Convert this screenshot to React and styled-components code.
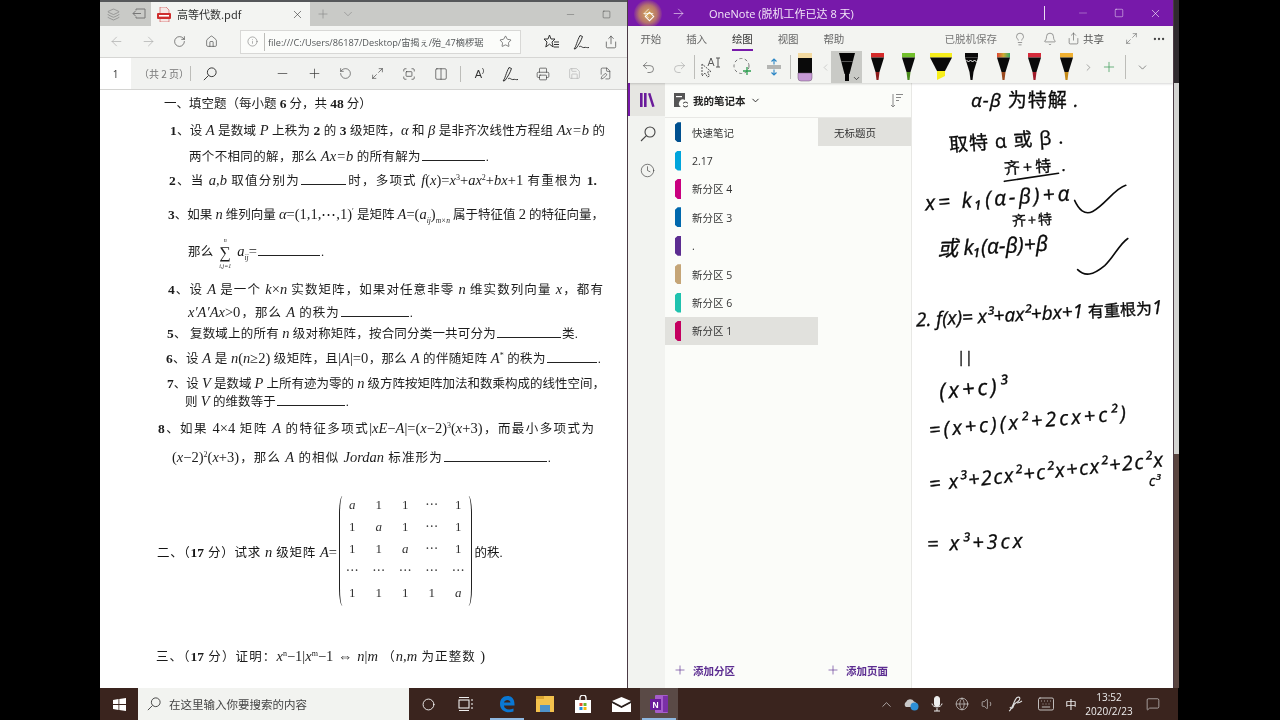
import React from "react";
import styled, { createGlobalStyle } from "styled-components";
import {
  ArrowLeft, ArrowRight, RotateCw, Home, Info, Star, Share, Minus, Plus, Maximize2, Printer, Save, X,
  ChevronDown, ChevronUp, ChevronLeft, ChevronRight, Square, Undo2, Redo2, Lightbulb, Bell, Ellipsis, Clock,
  Volume1, Keyboard, MessageSquare, Circle, Fullscreen, Columns2, RotateCcw, FileEdit, Layers, Globe,
} from "lucide-react";

const CJK = `"Noto Sans CJK SC", sans-serif`;
const UI = `"Open Sans", "Noto Sans CJK SC", sans-serif`;
const SERIF = `"Liberation Serif", "Noto Sans CJK SC", serif`;

/* full-width punctuation of the scanned paper */
const CM = "\uFF0C";
const LP = "\uFF08";
const RP = "\uFF09";
const CO = "\uFF1A";

const Global = createGlobalStyle`
  html, body { margin: 0; padding: 0; background: #000; }
  * { box-sizing: border-box; }
`;

const Screen = styled.div`
  width: 1280px; height: 720px; background: #000; padding: 0 102px 0 100px; overflow: hidden;
  font-family: ${UI}; filter: blur(0.35px);
`;
const Desktop = styled.div`display: flex; flex-direction: column; height: 720px;`;
const Windows = styled.div`display: flex; height: 688px; gap: 1px; background: #4a3a44;`;

/* shared */
const Slot = styled.div`
  width: ${p => p.$w}px; flex: none; height: 100%; display: flex; align-items: center; justify-content: center;
  color: ${p => p.$c || "#333"}; position: relative;
  margin-left: ${p => p.$ml || 0}px;
  background: ${p => p.$bg || "transparent"};
`;
const Spacer = styled.div`flex: 1;`;
const VRule = styled.div`
  width: 1px; flex: none; height: ${p => p.$h}px; background: ${p => p.$c || "#bdbdb9"};
  margin: 0 ${p => p.$mr || 0}px 0 ${p => p.$ml || 0}px;
`;

/* PDF window */
const PdfWindow = styled.section`width: 527px; flex: none; display: flex; flex-direction: column; background: #fff; overflow: hidden;`;
const TabStrip = styled.div`height: 26px; border-top: 2px solid #55575a; background: #c9cac7; display: flex; align-items: stretch; flex: none;`;
const Tab = styled.div`
  width: 159px; flex: none; background: #f3f4f2; display: flex; align-items: center; padding-left: 6px; font-size: 11px; color: #333;
`;
const TabTitle = styled.span`margin-left: 6px; flex: 1; font-family: ${CJK};`;
const AddressRow = styled.div`height: 32px; flex: none; background: #f3f4f2; display: flex; align-items: center; border-bottom: 1px solid #d6d6d4;`;
const AddressBox = styled.div`
  width: 281px; height: 24px; flex: none; margin-left: 13px; background: #fbfcfa; border: 1px solid #d8d8d6; display: flex; align-items: center; color: #444;
`;
const Url = styled.span`font-size: 9.2px; margin-left: 3px; flex: 1; white-space: nowrap; color: #55585a;`;
const PdfBar = styled.div`height: 32px; flex: none; background: #f1f2f0; display: flex; align-items: center; border-bottom: 1px solid #d4d4d2;`;
const PageInput = styled.div`width: 31px; height: 100%; flex: none; background: #fff; display: flex; align-items: center; justify-content: center; font-size: 10px; color: #333;`;
const PageLabel = styled.div`width: 59px; flex: none; padding-left: 8px; font-size: 10px; color: #777; font-family: ${CJK};`;
const ReadAloud = styled.span`font-size: 11px; font-family: "Liberation Sans", sans-serif;`;

const Page = styled.article`
  flex: 1; background: #fff; padding-top: 5px; color: #141414; font-family: ${SERIF}; font-size: 12.5px; overflow: hidden;
`;
const Line = styled.div`
  height: ${p => p.$h || 18}px; line-height: ${p => p.$h || 18}px; margin-top: ${p => p.$mt || 0}px; margin-left: ${p => p.$x - 100}px; width: ${p => p.$w}px;
  text-align-last: justify; white-space: nowrap; color: #1c1c1c;
`;
const MatrixLine = styled.div`
  height: 110px; margin-top: ${p => p.$mt}px; margin-left: ${p => p.$x - 100}px; display: flex; align-items: center;
`;
const MatrixLabel = styled.div`width: 180px; flex: none; text-align-last: justify; white-space: nowrap;`;
const Matrix = styled.div`
  width: 132.5px; height: 110px; margin: 0 3px 0 2px; flex: none; position: relative;
  display: grid; grid-template-columns: repeat(5, 26.5px); grid-auto-rows: 22px; text-align: center; line-height: 18px; font-size: 13px;
  &::before, &::after { content: ""; position: absolute; top: 0; bottom: 0; width: 6px; border: 0 solid #222; border-radius: 6px / 30px; }
  &::before { left: 0; border-left-width: 1px; }
  &::after { right: 0; border-right-width: 1px; }
`;
const Cell = styled.span`font-style: ${p => p.$i ? "italic" : "normal"}; color: #333;`;
const M = styled.i`font-family: "Liberation Serif", serif; font-size: 14.5px;`;
const N = styled.span`font-family: "Liberation Serif", serif; font-size: 14.5px;`;
const B = styled.b`font-family: "Liberation Serif", serif; font-size: 13.5px;`;
const Sup = styled.sup`font-size: 8px; line-height: 0;`;
const Sub = styled.sub`font-size: 7.5px; line-height: 0; font-style: italic;`;
const Blank = styled.span`
  display: inline-block; width: ${p => p.$w}px; height: 12px; border-bottom: 1px solid #222; vertical-align: baseline; margin: 0 1px;
`;
const SumStack = styled.span`
  display: inline-flex; flex-direction: column; align-items: center; gap: 2px; vertical-align: middle; width: 24px; margin: -14px 0; line-height: 1;
  text-align-last: center;
`;
const SumTiny = styled.span`font-size: 6px; line-height: 6px; font-style: italic;`;
const SumSign = styled.span`font-size: 16px; line-height: 16px; font-family: "Liberation Serif", serif;`;

/* OneNote */
const NoteWindow = styled.section`width: 545px; flex: none; display: flex; flex-direction: column; background: #fff; position: relative; overflow: hidden;`;
const TitleBar = styled.div`height: 26px; flex: none; background: #7719aa; color: #fff; display: flex; align-items: center; position: relative; padding-left: 4px;`;
const Glow = styled.div`
  position: absolute; left: 6px; top: 0; width: 28px; height: 28px; border-radius: 50%;
  background: radial-gradient(circle, rgba(226,190,80,.9) 0%, rgba(215,165,75,.65) 45%, rgba(180,100,110,0) 75%);
  &::after { content: ""; position: absolute; left: 12px; top: 13px; width: 5px; height: 5px; border: 1px solid #fff; transform: rotate(45deg); }
`;
const NoteTitle = styled.span`font-size: 11px; margin-left: 17px; white-space: nowrap; font-family: ${UI}; color: #f3e7f8;`;
const Ribbon = styled.div`height: 57px; flex: none; background: #f3f4f1; display: flex; flex-direction: column; box-shadow: 0 1px 2px rgba(0,0,0,.16); position: relative; z-index: 1;`;
const RibbonTabs = styled.div`height: 25px; flex: none; display: flex; align-items: center;`;
const RTab = styled.div`
  width: 45.75px; height: 100%; flex: none; display: flex; justify-content: center; font-size: 10.5px; color: #555; font-family: ${CJK}; padding-top: 5px;
`;
const RTabLabel = styled.span`
  height: 20px; line-height: 16px; border-bottom: ${p => p.$active ? "2px solid #7719aa" : "none"}; color: ${p => p.$active ? "#333" : "#666"};
`;
const Saved = styled.span`font-size: 10.5px; color: #777; font-family: ${CJK}; margin-right: 8px;`;
const ShareBtn = styled.div`width: 51px; flex: none; display: flex; align-items: center; gap: 3px; padding-left: 1px; font-size: 10.5px; color: #555; font-family: ${CJK};`;
const ToolRow = styled.div`height: 32px; flex: none; display: flex; align-items: center; padding-left: 4px;`;
const PenChevron = styled.span`position: absolute; right: 1px; bottom: 0; display: flex; color: #222;`;
const Body = styled.div`flex: 1; display: flex; min-height: 0;`;
const Rail = styled.nav`width: 37px; flex: none; background: #f2f3f0; display: flex; flex-direction: column;`;
const RailBtn = styled.div`
  height: ${p => p.$h}px; display: flex; align-items: center; justify-content: center; color: #444;
  background: ${p => p.$active ? "#e6e6e2" : "transparent"};
  border-left: 2px solid ${p => p.$active ? "#7719aa" : "transparent"};
`;
const Panes = styled.div`width: 247px; flex: none; background: #fbfcf9; border-right: 1px solid #e8e8e5; display: flex; flex-direction: column;`;
const NotebookHead = styled.div`height: 35px; flex: none; display: flex; align-items: center; padding-left: 9px; border-bottom: 1px solid #e8e8e5; font-weight: 700; font-size: 10.5px; color: #222; font-family: ${CJK};`;
const NotebookName = styled.span`margin-left: 4px; margin-right: 4px;`;
const Columns = styled.div`flex: 1; display: flex; min-height: 0;`;
const SectionCol = styled.div`width: 153px; flex: none; display: flex; flex-direction: column;`;
const PageCol = styled.div`flex: 1; display: flex; flex-direction: column;`;
const ListArea = styled.div`flex: 1;`;
const Row = styled.div`
  height: 28.4px; display: flex; align-items: center; font-size: 10.5px; color: #333;
  padding-left: ${p => p.$pl}px; background: ${p => p.$sel ? "#e1e1dd" : "transparent"};
`;
const SecTab = styled.span`
  width: 6px; height: 20px; margin-right: 11px; flex: none; background: ${p => p.$c};
  clip-path: polygon(45% 0, 100% 0, 100% 100%, 45% 100%, 0 88%, 0 12%);
`;
const AddBtn = styled.div`
  height: 36px; flex: none; display: flex; align-items: center; gap: 6px; padding-left: ${p => p.$pl}px; color: #5c2d91; font-size: 10.5px; font-weight: 600; font-family: ${CJK};
`;
const Canvas = styled.div`flex: 1; position: relative; background: #fff; overflow: hidden;`;
const Ink = styled.div`
  position: absolute; left: ${p => p.$x - 913}px; top: ${p => p.$y - 85}px; font-size: ${p => p.$s || 20}px; line-height: 1; color: #0b0b0b; white-space: nowrap;
  font-family: "Open Sans", "Noto Sans CJK SC", sans-serif; font-style: ${p => p.$zh ? "normal" : "italic"};
  letter-spacing: ${p => p.$ls || 0}px; transform: translateY(-50%) rotate(${p => p.$r || 0}deg); transform-origin: left center;
  -webkit-text-stroke: .35px #0b0b0b;
`;
const InkZh = styled.span`font-style: normal; font-size: ${p => p.$s || 18}px;`;
const InkStroke = styled.svg`position: absolute; inset: 0; width: 100%; height: 100%; pointer-events: none;`;
const Strip = styled.div`width: 5px; flex: none; background: linear-gradient(#2f2a2e 0 12%, #d3d3d1 12% 66%, #5a4540 66%);`;

/* Taskbar */
const Taskbar = styled.footer`height: 32px; flex: none; background: #3a241e; display: flex; color: #eee; width: 1078px;`;
const SearchBox = styled.div`
  width: 271px; flex: none; background: #f2f3f0; display: flex; align-items: center; gap: 8px; padding-left: 9px; font-size: 11.5px; color: #444; font-family: ${CJK};
`;
const TaskIcon = styled(Slot)`
  ${p => p.$running && `&::after { content: ""; position: absolute; left: 2px; right: 2px; bottom: 0; height: 2px; background: #8fb8e0; }`}
`;
const Ime = styled.span`font-size: 11.5px; color: #eee; font-family: ${CJK};`;
const ClockBox = styled.div`width: 58px; flex: none; display: flex; flex-direction: column; align-items: center; justify-content: center; font-size: 10px; line-height: 14px; color: #eee;`;

const Glass = ({ size = 15 }) => (
  <svg width={size} height={size} viewBox="0 0 16 16" fill="none" stroke="currentColor" strokeWidth="1.1">
    <circle cx="10" cy="6" r="5" /><path d="M6.4 9.600L1 15" />
  </svg>
);
const CalligraphyPen = () => (
  <svg width="17" height="16" viewBox="0 0 17 16" fill="none" stroke="currentColor" strokeWidth="1">
    <path d="M1 15C3 13 4 7 7 1.500L9.500 2.500C8 7 5.500 11 3 14.500Z" /><path d="M6 13C8 11 9 14 11 13.500S14 14 16 13.500" />
  </svg>
);
const FavList = () => (
  <svg width="17" height="15" viewBox="0 0 17 15" fill="none" stroke="currentColor" strokeWidth="1">
    <path d="M6.500 1L8 5H12L9 8L10.200 13L6.500 10.200L2.800 13L4 8L1 5H5Z" /><path d="M11 8H16M11 10.500H16M11 13H16" />
  </svg>
);
const BackTab = () => (
  <svg width="14" height="12" viewBox="0 0 14 12" fill="none" stroke="currentColor" strokeWidth="1">
    <path d="M4 2.500V1H13V10H4V8.500" /><path d="M9 5.500H1M3.500 3L1 5.500L3.500 8" />
  </svg>
);
const TextSelect = () => (
  <svg width="24" height="22" viewBox="0 0 24 22" fill="none" stroke="#555" strokeWidth="1">
    <path d="M3 8L3 20L6 17L8.500 21L10.500 20L8.500 16L12 15.500Z" strokeDasharray="2 1" />
    <path d="M9 10L12 2L15 10M10.200 7.500H13.800M19 2V11M17 2H21M17 11H21" />
  </svg>
);
const DashAdd = () => (
  <svg width="20" height="20" viewBox="0 0 20 20" fill="none">
    <circle cx="8.500" cy="9" r="7.500" stroke="#777" strokeDasharray="3 2.500" />
    <path d="M14 10V18M10 14H18" stroke="#2e9e50" strokeWidth="1.300" />
  </svg>
);
const SpaceArrows = () => (
  <svg width="16" height="18" viewBox="0 0 16 18" fill="none" stroke="#2b86c5" strokeWidth="1.100">
    <path d="M8 1V6.500M5.500 3.500L8 1L10.500 3.500M8 11.500V17M5.500 14.500L8 17L10.500 14.500" />
    <path d="M1 8H15M1 10H15" stroke="#777" />
  </svg>
);
const SortLines = () => (
  <svg width="14" height="15" viewBox="0 0 14 15" fill="none" stroke="currentColor" strokeWidth="1">
    <path d="M3 1V14M1 12L3 14L5 12M6 1.500H13M6 4.500H11M6 7.500H9" />
  </svg>
);
const TaskView = () => (
  <svg width="15" height="16" viewBox="0 0 15 16" fill="none" stroke="#eee" strokeWidth="1.100">
    <rect x="1" y="4" width="10" height="8" /><path d="M1 1.500H11M1 14.500H11M14 3V5M14 7V9M14 11V13" />
  </svg>
);
const CloudSync = () => (
  <svg width="16" height="14" viewBox="0 0 16 14">
    <path d="M3 10A3 3 0 0 1 3 5A4.500 4.500 0 0 1 11 4.500A3 3 0 0 1 12 10Z" fill="#c8c8c8" />
    <circle cx="11.500" cy="9.500" r="4" fill="#2d8fd6" />
  </svg>
);
const MicFill = () => (
  <svg width="12" height="16" viewBox="0 0 12 16" fill="none" stroke="#eee">
    <rect x="3.500" y="0.500" width="5" height="10" rx="2.500" fill="#eee" /><path d="M1 7.500C1 12 11 12 11 7.500M6 12V15M3 15H9" />
  </svg>
);
const PenFlourish = () => (
  <svg width="16" height="18" viewBox="0 0 16 18" fill="none" stroke="#ddd" strokeWidth="1.100">
    <path d="M2 16C5 15 7 5 10 2.500C13 1 14 4 11 6.500C9 8 7 8 6.500 11C6 14 3.500 14 3 12" /><path d="M10 8C12 8 13 7.500 15 6" />
  </svg>
);

const Pen = ({ cap, tip, body = "#0a0a0a", wave }) => (
  <svg width="20" height="30" viewBox="0 0 20 30">
    <rect x="3" y="1" width="13" height="4.5" fill={cap} />
    <path d="M3 5.500H16L11.500 20H7.500Z" fill={body} />
    {wave && <path d="M4.500 8l2 2 2-2 2 2 2-2 2 2" stroke="#fff" fill="none" strokeWidth="1" />}
    <path d="M7.500 20H11.500L10.500 28H8.500Z" fill={tip} />
  </svg>
);
const RainbowPen = () => (
  <svg width="20" height="30" viewBox="0 0 20 30">
    <defs><linearGradient id="rb"><stop offset="0" stopColor="#d43" /><stop offset=".5" stopColor="#ca3" /><stop offset="1" stopColor="#3a6" /></linearGradient></defs>
    <rect x="3" y="1" width="13" height="4.5" fill="url(#rb)" />
    <path d="M3 5.500H16L11.500 20H7.500Z" fill="#0a0a0a" />
    <path d="M7.500 20H11.500L10.500 28H8.500Z" fill="#9a4a20" />
  </svg>
);
const BlackPen = () => (
  <svg width="20" height="30" viewBox="0 0 20 30">
    <path d="M2 1H18L12.500 22H7.500Z" fill="#050505" />
    <rect x="4" y="9" width="12" height="1" fill="#555" />
    <rect x="8" y="22" width="4" height="7" fill="#050505" />
  </svg>
);
const Highlighter = () => (
  <svg width="26" height="30" viewBox="0 0 26 30">
    <rect x="2" y="1" width="22" height="4.500" fill="#f6ee1c" />
    <path d="M2 5.500H24L17 19H9Z" fill="#0a0a0a" />
    <path d="M9 19H17V24L9 28Z" fill="#f6ee1c" />
  </svg>
);
const Eraser = () => (
  <svg width="16" height="30" viewBox="0 0 16 30">
    <rect x="1" y="1" width="14" height="5" fill="#f2d9a0" />
    <rect x="1" y="6" width="14" height="15" fill="#0a0a0a" />
    <path d="M1 21H15V26Q15 29 12 29H4Q1 29 1 26Z" fill="#c79ad6" stroke="#6b5272" strokeWidth=".5" />
  </svg>
);
const PdfIcon = () => (
  <svg width="14" height="15" viewBox="0 0 14 15">
    <path d="M3 0H9L12 3V15H3Z" fill="#f6e7e5" stroke="#c44" strokeWidth=".6" />
    <rect x="0" y="6" width="14" height="6" rx="1" fill="#cf2e2e" />
    <rect x="2" y="8" width="10" height="1.600" fill="#fff" />
  </svg>
);
const NotebookIcon = () => (
  <svg width="15" height="15" viewBox="0 0 15 15">
    <path d="M0 0H11V7A4 4 0 0 0 7 14H0Z" fill="#555" />
    <rect x="2" y="3" width="6" height="1.200" fill="#fff" />
    <path d="M9 10.500a3 3 0 0 1 5 0M14 12.500a3 3 0 0 1-5 0" stroke="#333" fill="none" />
  </svg>
);
const LibraryIcon = () => (
  <svg width="15" height="14" viewBox="0 0 15 14">
    <rect x="0" y="0" width="2.600" height="14" fill="#6a1b9a" />
    <rect x="4" y="0" width="2.600" height="14" fill="#6a1b9a" />
    <path d="M8 0.600L10.400 0L14.600 13.400L12.200 14Z" fill="#6a1b9a" />
  </svg>
);
const WinLogo = () => (
  <svg width="13" height="13" viewBox="0 0 13 13"><path d="M0 1.900L5.500 1V6H0ZM6.300 .9L13 0V6H6.300ZM0 6.900H5.500V12L0 11.100ZM6.300 6.900H13V13L6.300 12.100Z" fill="#fff" /></svg>
);
const EdgeLogo = () => (
  <svg width="16" height="18" viewBox="0 0 16 18">
    <path d="M1 9C1 4 4 1 8.500 1 13 1 15.500 4 15.500 9.500V10.500H5C5 14 9.500 15.500 14.500 13.500V16.500C8 18.800 1 16 1 9ZM5 7.500H11.500C11.500 4 5.500 4 5 7.500Z" fill="#0a78d4" />
  </svg>
);
const FolderLogo = () => (
  <svg width="18" height="16" viewBox="0 0 18 16">
    <rect x="0" y="0" width="18" height="16" fill="#f3c24d" />
    <rect x="0" y="0" width="8" height="3" fill="#d9a431" />
    <rect x="4" y="9" width="10" height="7" fill="#4f93c9" />
  </svg>
);
const StoreLogo = () => (
  <svg width="16" height="18" viewBox="0 0 16 18">
    <path d="M5 5V3a3 3 0 0 1 6 0V5" stroke="#fff" fill="none" strokeWidth="1.300" />
    <rect x="0" y="5" width="16" height="13" fill="#fff" />
    <rect x="4.500" y="8" width="3" height="3" fill="#e8492e" /><rect x="8.500" y="8" width="3" height="3" fill="#6cb52d" />
    <rect x="4.500" y="12" width="3" height="3" fill="#1f8ee0" /><rect x="8.500" y="12" width="3" height="3" fill="#f5b90f" />
  </svg>
);
const MailLogo = () => (
  <svg width="19" height="15" viewBox="0 0 19 15">
    <path d="M0 4L9.500 0L19 4L9.500 9Z" fill="#fff" />
    <path d="M0 6L9.500 11L19 6V15H0Z" fill="#fff" />
    <path d="M0 5L9.500 10L19 5" stroke="#222" strokeWidth="1" fill="none" />
  </svg>
);
const NoteLogo = () => (
  <svg width="20" height="20" viewBox="0 0 20 20">
    <rect x="6" y="1" width="13" height="18" rx="1" fill="#a55dc9" />
    <rect x="14" y="2" width="5" height="16" fill="#7a2fa6" />
    <rect x="1" y="5" width="11" height="11" fill="#6a1b9a" />
    <text x="6.500" y="13.500" fill="#fff" fontSize="8.500" fontWeight="700" textAnchor="middle" fontFamily="Liberation Sans, sans-serif">N</text>
  </svg>
);

const sections = [
  ["快速笔记", "#00508f"], ["2.17", "#00a5dc"], ["新分区 4", "#c9007f"], ["新分区 3", "#0068ad"],
  [".", "#5c2d91"], ["新分区 5", "#c5a577"], ["新分区 6", "#1fc2ae"], ["新分区 1", "#c40060", true],
];
const matrix = [
  ["a", "1", "1", "⋯", "1"], ["1", "a", "1", "⋯", "1"], ["1", "1", "a", "⋯", "1"],
  ["⋯", "⋯", "⋯", "⋯", "⋯"], ["1", "1", "1", "1", "a"],
];
const thin = { strokeWidth: 1.1 };

export default function App() {
  return (
    <Screen>
      <Global />
      <Desktop>
        <Windows>
          <PdfWindow>
            <TabStrip>
              <Slot $w={26} $c="#777"><Layers size={13} {...thin} /></Slot>
              <Slot $w={25} $c="#777"><BackTab /></Slot>
              <Tab><PdfIcon /><TabTitle>高等代数.pdf</TabTitle><Slot $w={26}><X size={13} {...thin} /></Slot></Tab>
              <Slot $w={26} $c="#888"><Plus size={14} {...thin} /></Slot>
              <Slot $w={24} $c="#888"><ChevronDown size={14} {...thin} /></Slot>
              <Spacer />
              <Slot $w={36} $c="#666"><Minus size={11} {...thin} /></Slot>
              <Slot $w={36}><Square size={9} {...thin} /></Slot>
              <Slot $w={3} />
            </TabStrip>
            <AddressRow>
              <Slot $w={32} $c="#aaa"><ArrowLeft size={15} {...thin} /></Slot>
              <Slot $w={32} $c="#aaa"><ArrowRight size={15} {...thin} /></Slot>
              <Slot $w={31}><RotateCw size={13} {...thin} /></Slot>
              <Slot $w={32}><Home size={13} {...thin} /></Slot>
              <AddressBox>
                <Slot $w={23} $c="#666"><Info size={11} {...thin} /></Slot>
                <VRule $h={18} />
                <Url>file:///C:/Users/86187/Desktop/宙揭ぇ/殆_47樀椤琚</Url>
                <Slot $w={30}><Star size={13} {...thin} /></Slot>
              </AddressBox>
              <Slot $w={30} $ml={15}><FavList /></Slot>
              <Slot $w={30}><CalligraphyPen /></Slot>
              <Slot $w={30}><Share size={14} {...thin} /></Slot>
            </AddressRow>
            <PdfBar>
              <PageInput>1</PageInput>
              <PageLabel>{LP}共 2 页{RP}</PageLabel>
              <VRule $h={15} />
              <Slot $w={38}><Glass size={14} /></Slot>
              <Slot $w={38} />
              <Slot $w={31.6}><Minus size={15} {...thin} /></Slot>
              <Slot $w={31.6}><Plus size={15} {...thin} /></Slot>
              <Slot $w={31.6}><RotateCcw size={13} {...thin} /></Slot>
              <Slot $w={31.6}><Maximize2 size={13} {...thin} /></Slot>
              <Slot $w={31.6}><Fullscreen size={14} {...thin} /></Slot>
              <Slot $w={31.6}><Columns2 size={14} {...thin} /></Slot>
              <VRule $h={16} $ml={3} $mr={3} />
              <Slot $w={31.6}><ReadAloud>A⁾</ReadAloud></Slot>
              <Slot $w={31.6}><CalligraphyPen /></Slot>
              <Slot $w={31.6}><Printer size={14} {...thin} /></Slot>
              <Slot $w={31.6} $c="#aaa"><Save size={13} {...thin} /></Slot>
              <Slot $w={31.6}><FileEdit size={13} {...thin} /></Slot>
            </PdfBar>
            <Page>
              <Line $x={164} $w={204}>一、填空题{LP}每小题 <B>6</B> 分{CM}共 <B>48</B> 分{RP}</Line>
              <Line $x={170} $w={435} $mt={8}><B>1</B>、设 <M>A</M> 是数域 <M>P</M> 上秩为 <B>2</B> 的 <B>3</B> 级矩阵{CM}<M>α</M> 和 <M>β</M> 是非齐次线性方程组 <M>Ax=b</M> 的</Line>
              <Line $x={189} $w={300} $mt={8}>两个不相同的解{CM}那么 <M>Ax=b</M> 的所有解为<Blank $w={63} />.</Line>
              <Line $x={169} $w={428} $mt={6}><B>2</B>、当 <M>a,b</M> 取值分别为<Blank $w={45} />时{CM}多项式 <M>f</M><N>(</N><M>x</M><N>)=</N><M>x</M><Sup>3</Sup><N>+</N><M>ax</M><Sup>2</Sup><N>+</N><M>bx</M><N>+1</N> 有重根为 <B>1.</B></Line>
              <Line $x={168} $w={435} $mt={16}><B>3</B>、如果 <M>n</M> 维列向量 <M>α</M><N>=(1,1,⋯,1)</N><Sup>′</Sup> 是矩阵 <M>A</M><N>=(</N><M>a</M><Sub>ij</Sub><N>)</N><Sub>m×n</Sub> 属于特征值 <N>2</N> 的特征向量{CM}</Line>
              <Line $x={188} $w={136} $mt={19}>那么<SumStack><SumTiny>n</SumTiny><SumSign>∑</SumSign><SumTiny>i,j=1</SumTiny></SumStack><M>a</M><Sub>ij</Sub><N>=</N><Blank $w={62} />.</Line>
              <Line $x={168} $w={435} $mt={20}><B>4</B>、设 <M>A</M> 是一个 <M>k</M><N>×</N><M>n</M> 实数矩阵{CM}如果对任意非零 <M>n</M> 维实数列向量 <M>x</M>{CM}都有</Line>
              <Line $x={188} $w={225} $mt={5}><M>x′A′Ax</M><N>&gt;0</N>{CM}那么 <M>A</M> 的秩为<Blank $w={68} />.</Line>
              <Line $x={167} $w={411} $mt={3}><B>5</B>、 复数域上的所有 <M>n</M> 级对称矩阵{CM}按合同分类一共可分为<Blank $w={64} />类.</Line>
              <Line $x={166} $w={435} $mt={7}><B>6</B>、设 <M>A</M> 是 <M>n</M><N>(</N><M>n</M><N>≥2)</N> 级矩阵{CM}且<N>|</N><M>A</M><N>|=0</N>{CM}那么 <M>A</M> 的伴随矩阵 <M>A</M><Sup>*</Sup> 的秩为<Blank $w={50} />.</Line>
              <Line $x={167} $w={433} $mt={7}><B>7</B>、设 <M>V</M> 是数域 <M>P</M> 上所有迹为零的 <M>n</M> 级方阵按矩阵加法和数乘构成的线性空间{CM}</Line>
              <Line $x={185} $w={164}>则 <M>V</M> 的维数等于<Blank $w={68} />.</Line>
              <Line $x={158} $w={436} $mt={9}><B>8</B>、如果 <N>4×4</N> 矩阵 <M>A</M> 的特征多项式<N>|</N><M>xE</M><N>−</N><M>A</M><N>|=(</N><M>x</M><N>−2)</N><Sup>3</Sup><N>(</N><M>x</M><N>+3)</N>{CM}而最小多项式为</Line>
              <Line $x={172} $w={379} $mt={11}><N>(</N><M>x</M><N>−2)</N><Sup>2</Sup><N>(</N><M>x</M><N>+3)</N>{CM}那么 <M>A</M> 的相似 <M>Jordan</M> 标准形为<Blank $w={103} />.</Line>
              <MatrixLine $x={157} $mt={30}>
                <MatrixLabel>二、{LP}<B>17</B> 分{RP}试求 <M>n</M> 级矩阵 <M>A</M><N>=</N></MatrixLabel>
                <Matrix>
                  {matrix.flat().map((v, i) => <Cell key={i} $i={v === "a"}>{v}</Cell>)}
                </Matrix>
                <span>的秩.</span>
              </MatrixLine>
              <Line $x={156} $w={329} $mt={41}>三、{LP}<B>17</B> 分{RP}证明{CO}<M>x</M><Sup>n</Sup><N>−1|</N><M>x</M><Sup>m</Sup><N>−1 ⇔ </N><M>n</M><N>|</N><M>m</M> {LP}<M>n,m</M> 为正整数 <N>)</N></Line>
            </Page>
          </PdfWindow>

          <NoteWindow>
            <TitleBar>
              <Glow />
              <Slot $w={32} $c="#fff"><ArrowLeft size={15} {...thin} /></Slot>
              <Slot $w={28} $c="#e7d4ef"><ArrowRight size={15} {...thin} /></Slot>
              <NoteTitle>OneNote (脱机工作已达 8 天)</NoteTitle>
              <Spacer />
              <VRule $h={14} $c="#eadcf1" $mr={20} />
              <Slot $w={36} $c="#caa5dc"><Minus size={12} {...thin} /></Slot>
              <Slot $w={36} $c="#fff"><Square size={10} {...thin} /></Slot>
              <Slot $w={36} $c="#fff"><X size={13} {...thin} /></Slot>
            </TitleBar>
            <Ribbon>
              <RibbonTabs>
                <RTab><RTabLabel>开始</RTabLabel></RTab>
                <RTab><RTabLabel>插入</RTabLabel></RTab>
                <RTab><RTabLabel $active>绘图</RTabLabel></RTab>
                <RTab><RTabLabel>视图</RTabLabel></RTab>
                <RTab><RTabLabel>帮助</RTabLabel></RTab>
                <Spacer />
                <Saved>已脱机保存</Saved>
                <Slot $w={29} $c="#666"><Lightbulb size={14} {...thin} /></Slot>
                <Slot $w={32} $c="#666"><Bell size={14} {...thin} /></Slot>
                <ShareBtn><Share size={13} {...thin} />共享</ShareBtn>
                <Slot $w={28} $c="#666"><Maximize2 size={13} {...thin} /></Slot>
                <Slot $w={28} $c="#444"><Ellipsis size={14} /></Slot>
              </RibbonTabs>
              <ToolRow>
                <Slot $w={32} $c="#555"><Undo2 size={15} {...thin} /></Slot>
                <Slot $w={30} $c="#aaa"><Redo2 size={15} {...thin} /></Slot>
                <VRule $h={24} />
                <Slot $w={32}><TextSelect /></Slot>
                <Slot $w={31}><DashAdd /></Slot>
                <Slot $w={31}><SpaceArrows /></Slot>
                <VRule $h={24} $ml={1} />
                <Slot $w={28}><Eraser /></Slot>
                <Slot $w={12} $c="#aaa"><ChevronLeft size={11} {...thin} /></Slot>
                <Slot $w={31} $bg="#c9cac6"><BlackPen /><PenChevron><ChevronDown size={9} /></PenChevron></Slot>
                <Slot $w={31.5}><Pen cap="#d52b2b" tip="#8c1b1b" /></Slot>
                <Slot $w={31.5}><Pen cap="#72c02c" tip="#4a8a1c" /></Slot>
                <Slot $w={31.5}><Highlighter /></Slot>
                <Slot $w={31.5}><Pen cap="#0a0a0a" tip="#0a0a0a" wave /></Slot>
                <Slot $w={31.5}><RainbowPen /></Slot>
                <Slot $w={31.5}><Pen cap="#d52b3b" tip="#a01c2a" /></Slot>
                <Slot $w={31.5}><Pen cap="#f0b030" tip="#c58a18" /></Slot>
                <Slot $w={12} $c="#555"><ChevronRight size={11} {...thin} /></Slot>
                <Slot $w={28} $c="#3a9a55"><Plus size={16} {...thin} /></Slot>
                <VRule $h={24} $ml={2} />
                <Slot $w={34} $c="#444"><ChevronDown size={13} {...thin} /></Slot>
              </ToolRow>
            </Ribbon>
            <Body>
              <Rail>
                <RailBtn $h={33} $active><LibraryIcon /></RailBtn>
                <RailBtn $h={36}><Glass size={16} /></RailBtn>
                <RailBtn $h={36}><Clock size={15} {...thin} /></RailBtn>
              </Rail>
              <Panes>
                <NotebookHead>
                  <NotebookIcon /><NotebookName>我的笔记本</NotebookName><ChevronDown size={11} />
                  <Spacer />
                  <Slot $w={28} $c="#888"><SortLines /></Slot>
                </NotebookHead>
                <Columns>
                  <SectionCol>
                    <ListArea>
                      {sections.map(([name, color, sel]) => (
                        <Row key={name} $pl={10} $sel={sel}><SecTab $c={color} />{name}</Row>
                      ))}
                    </ListArea>
                    <AddBtn $pl={8}><Plus size={14} {...thin} />添加分区</AddBtn>
                  </SectionCol>
                  <PageCol>
                    <ListArea><Row $pl={16} $sel>无标题页</Row></ListArea>
                    <AddBtn $pl={8}><Plus size={14} {...thin} />添加页面</AddBtn>
                  </PageCol>
                </Columns>
              </Panes>
              <Canvas>
                <Ink $x={972} $y={102} $s={19} $ls={1}>α-β <InkZh $s={19}>为特解</InkZh> .</Ink>
                <Ink $x={950} $y={147} $s={19} $zh $r={-4} $ls={1}>取特 α 或 β .</Ink>
                <Ink $x={1005} $y={170} $s={16} $zh $ls={3} $r={-3}>齐+特 .</Ink>
                <Ink $x={926} $y={205} $s={21} $r={-4} $ls={3}>x= k₁(α-β)+α</Ink>
                <Ink $x={1013} $y={223} $s={14} $zh $ls={2} $r={-3}>齐+特</Ink>
                <Ink $x={938} $y={251} $s={21} $r={-3}>或 k₁(α-β)+β</Ink>
                <Ink $x={917} $y={322} $s={19} $r={-3}>2. f(x)= x³+ax²+bx+1 <InkZh $s={16}>有重根为</InkZh>1</Ink>
                <Ink $x={958} $y={359} $s={14}>||</Ink>
                <Ink $x={940} $y={392} $s={22} $r={-5} $ls={3}>(x+c)³</Ink>
                <Ink $x={930} $y={432} $s={20} $r={-5} $ls={3}>=(x+c)(x²+2cx+c²)</Ink>
                <Ink $x={930} $y={486} $s={20} $r={-6} $ls={1.5}>= x³+2cx²+c²x+cx²+2c²x</Ink>
                <Ink $x={1150} $y={483} $s={14}>c³</Ink>
                <Ink $x={928} $y={546} $s={20} $r={-2} $ls={3}>= x³+3cx</Ink>
                <InkStroke viewBox="0 0 260 603">
                  <g fill="none" stroke="#0b0b0b" strokeWidth="1.6" strokeLinecap="round">
                    <path d="M92 98L146 90" />
                    <path d="M162 117C166 126 172 132 180 128C192 122 202 105 213 102" />
                    <path d="M165 186C172 193 180 192 192 182C200 175 207 160 215 155" />
                  </g>
                </InkStroke>
              </Canvas>
            </Body>
          </NoteWindow>
          <Strip />
        </Windows>

        <Taskbar>
          <Slot $w={38}><WinLogo /></Slot>
          <SearchBox><Glass size={14} />在这里输入你要搜索的内容</SearchBox>
          <Slot $w={38} $c="#fff"><Circle size={13} strokeWidth={1.6} /></Slot>
          <Slot $w={37}><TaskView /></Slot>
          <TaskIcon $w={38} $ml={4} $running><EdgeLogo /></TaskIcon>
          <TaskIcon $w={38}><FolderLogo /></TaskIcon>
          <TaskIcon $w={38}><StoreLogo /></TaskIcon>
          <TaskIcon $w={38}><MailLogo /></TaskIcon>
          <TaskIcon $w={38} $bg="#5a4a46" $running><NoteLogo /></TaskIcon>
          <Spacer />
          <Slot $w={24} $c="#ddd"><ChevronUp size={15} {...thin} /></Slot>
          <Slot $w={26}><CloudSync /></Slot>
          <Slot $w={25}><MicFill /></Slot>
          <Slot $w={26} $c="#ddd"><Globe size={14} {...thin} /></Slot>
          <Slot $w={25} $c="#ddd"><Volume1 size={14} {...thin} /></Slot>
          <Slot $w={30}><PenFlourish /></Slot>
          <Slot $w={32} $c="#ddd"><Keyboard size={18} {...thin} /></Slot>
          <Slot $w={18}><Ime>中</Ime></Slot>
          <ClockBox><span>13:52</span><span>2020/2/23</span></ClockBox>
          <Slot $w={30} $c="#ddd"><MessageSquare size={14} {...thin} /></Slot>
          <Slot $w={10} />
        </Taskbar>
      </Desktop>
    </Screen>
  );
}
